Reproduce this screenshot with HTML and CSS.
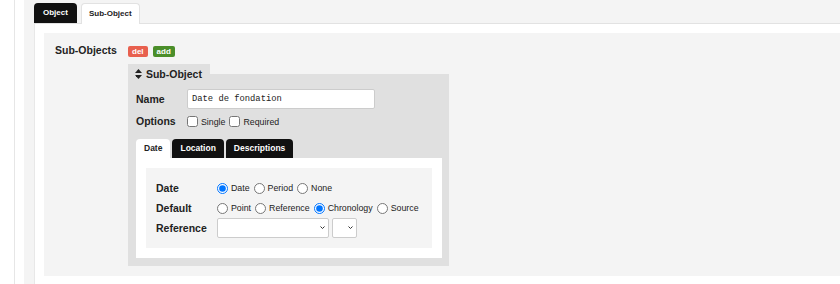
FILE: index.html
```html
<!DOCTYPE html>
<html lang="en">
<head>
    <meta charset="UTF-8">
    <title>Sub-Object</title>
    <link rel="stylesheet" href="styles.css">
</head>
<body>

    <div class="shell">
        <div class="wrap">

            <!-- Object tabs -->
            <div class="tabs">
                <a href="#" class="tab">Object</a>
                <a href="#" class="tab active">Sub-Object</a>
            </div>

            <div class="tab-body">
                <div class="panel">
                    <div class="panel-label">Sub-Objects</div>
                    <div class="panel-main">
                        <div class="actions">
                            <span class="badge del">del</span>
                            <span class="badge add">add</span>
                        </div>

                        <!-- One sub-object -->
                        <fieldset class="sub">
                            <legend>
                                <svg class="sort" width="7" height="10" viewBox="0 0 7 10">
                                    <polygon points="0,4 3.5,0 7,4" fill="#222"/>
                                    <polygon points="0,6 7,6 3.5,10" fill="#222"/>
                                </svg>
                                Sub-Object
                            </legend>
                            <div class="sub-body">
                                <div class="frow">
                                    <label class="flabel">Name</label>
                                    <input type="text" class="text" value="Date de fondation">
                                </div>
                                <div class="frow opts">
                                    <label class="flabel">Options</label>
                                    <label class="opt"><input type="checkbox">Single</label>
                                    <label class="opt"><input type="checkbox">Required</label>
                                </div>

                                <div class="itabs">
                                    <a href="#" class="itab active">Date</a>
                                    <a href="#" class="itab">Location</a>
                                    <a href="#" class="itab">Descriptions</a>
                                </div>
                                <div class="ipanel">
                                    <div class="ibox">
                                        <div class="irow">
                                            <span class="ilabel">Date</span>
                                            <label class="opt"><input type="radio" name="type" checked>Date</label>
                                            <label class="opt"><input type="radio" name="type">Period</label>
                                            <label class="opt"><input type="radio" name="type">None</label>
                                        </div>
                                        <div class="irow">
                                            <span class="ilabel">Default</span>
                                            <label class="opt"><input type="radio" name="def">Point</label>
                                            <label class="opt"><input type="radio" name="def">Reference</label>
                                            <label class="opt"><input type="radio" name="def" checked>Chronology</label>
                                            <label class="opt"><input type="radio" name="def">Source</label>
                                        </div>
                                        <div class="irow">
                                            <span class="ilabel">Reference</span>
                                            <span class="sel-wrap sel-wide">
                                                <select class="sel"><option></option></select>
                                                <svg class="chev" width="5" height="3" viewBox="0 0 5 3"><polyline points="0.5,0.5 2.5,2.5 4.5,0.5" fill="none" stroke="#333" stroke-width="1"/></svg>
                                            </span>
                                            <span class="sel-wrap sel-small">
                                                <select class="sel"><option></option></select>
                                                <svg class="chev" width="5" height="3" viewBox="0 0 5 3"><polyline points="0.5,0.5 2.5,2.5 4.5,0.5" fill="none" stroke="#333" stroke-width="1"/></svg>
                                            </span>
                                        </div>
                                    </div>
                                </div>
                            </div>
                        </fieldset>
                    </div>
                </div>
            </div>

        </div>
    </div>

</body>
</html>
```

FILE: styles.css
```css
body {
    margin: 0;
    font-family: "Liberation Sans", Arial, sans-serif;
    color: #222;
    background-color: #fff;
}

/* Outer frame */
.shell {
    margin-left: 14px;
    border-left: 1px solid #e6e6e6;
    padding-left: 9px;
}

.wrap {
    background-color: #f4f4f4;
    padding-left: 10px;
}

/* Top tabs */
.tabs {
    display: flex;
    align-items: flex-end;
    height: 23px;
    border-bottom: 1px solid #e2e2e2;
}

.tab {
    height: 20px;
    line-height: 20px;
    padding: 0 9px;
    margin-right: 4px;
    background-color: #111;
    color: #fff;
    font-size: 8px;
    font-weight: bold;
    text-decoration: none;
    border-radius: 4px 4px 0 0;
}

.tab.active {
    background-color: #fff;
    color: #222;
    border: 1px solid #e2e2e2;
    border-bottom: 0;
    padding: 0 7px;
    margin-bottom: -1px;
}

.tab-body {
    background-color: #fff;
    border-left: 1px solid #e8e8e8;
    padding: 9px 0 9px 9px;
}

/* Sub-objects panel */
.panel {
    background-color: #f4f4f4;
    display: grid;
    grid-template-columns: 73px auto;
    padding: 11px 0 10px 11px;
}

.panel-label,
.flabel,
.ilabel {
    font-size: 10.5px;
    font-weight: bold;
    line-height: 13px;
}

.actions {
    display: flex;
    align-items: flex-end;
    gap: 5px;
    height: 13px;
}

.badge {
    height: 11px;
    line-height: 11px;
    padding: 0 4px;
    font-size: 8px;
    font-weight: bold;
    color: #fff;
    border-radius: 2px;
}

.badge.del {
    background-color: #e8604e;
}

.badge.add {
    background-color: #4b8e2a;
}

/* Sub-object box */
.sub {
    margin: 7px 0 0;
    padding: 0;
    border: 0;
    min-width: 0;
    width: 321px;
    box-sizing: border-box;
    background-color: #e0e0e0;
}

.sub legend {
    background-color: #e0e0e0;
    padding: 0 8px 0 7px;
    height: 20px;
    line-height: 20px;
    font-size: 10.5px;
    font-weight: bold;
}

.sort {
    vertical-align: -1px;
    margin-right: 1px;
}

.sub-body {
    padding: 5px 7px 8px 8px;
}

.frow {
    display: flex;
    align-items: center;
    margin-bottom: 6px;
}

.frow.opts {
    margin-bottom: 11px;
}

.flabel {
    width: 51px;
}

.text {
    width: 188px;
    height: 20px;
    box-sizing: border-box;
    margin: 0;
    padding: 0 4px;
    border: 1px solid #ccc;
    border-radius: 2px;
    font-family: "Liberation Mono", monospace;
    font-size: 8.8px;
    color: #222;
}

.opt {
    display: inline-flex;
    align-items: center;
    font-size: 8.8px;
    margin-right: 4px;
}

.opt input {
    width: 11px;
    height: 11px;
    margin: 0 3px 0 0;
}

/* Inner tabs */
.itabs {
    display: flex;
    gap: 2px;
    height: 19px;
}

.itab {
    line-height: 19px;
    padding: 0 8px;
    font-size: 8.5px;
    font-weight: bold;
    background-color: #111;
    color: #fff;
    text-decoration: none;
    border-radius: 4px 4px 0 0;
}

.itab.active {
    background-color: #fff;
    color: #222;
}

.ipanel {
    background-color: #fff;
    padding: 10px;
}

.ibox {
    background-color: #f4f4f4;
    padding: 10px 0 10px 10px;
}

.irow {
    display: flex;
    align-items: center;
    height: 20px;
}

.ilabel {
    width: 61px;
}

/* Selects with a drawn chevron */
.sel-wrap {
    position: relative;
    display: inline-block;
    height: 20px;
    margin-right: 3px;
}

.sel-wide {
    width: 112px;
}

.sel-small {
    width: 25px;
}

.sel {
    appearance: none;
    -webkit-appearance: none;
    display: block;
    width: 100%;
    height: 20px;
    margin: 0;
    border: 1px solid #ccc;
    border-radius: 2px;
    background-color: #fff;
    font-size: 8.8px;
}

.chev {
    position: absolute;
    right: 4px;
    top: 8px;
    pointer-events: none;
}
```
